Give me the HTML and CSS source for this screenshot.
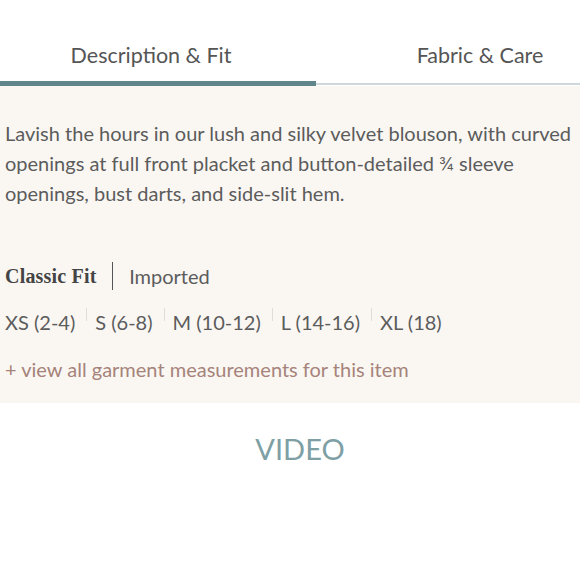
FILE: index.html
```html
<!DOCTYPE html>
<html>
<head>
<meta charset="utf-8">
<link rel="stylesheet" href="styles.css">
</head>
<body>
<div class="tabs">
  <div class="tab active">Description &amp; Fit</div>
  <div class="tab">Fabric &amp; Care</div>
</div>
<div class="panel">
  <p class="desc">Lavish the hours in our lush and silky velvet blouson, with curved openings at full front placket and button-detailed ¾ sleeve openings, bust darts, and side-slit hem.</p>
  <div class="fit">
    <span class="fit-name">Classic Fit</span>
    <span class="fit-sep"></span>
    <span class="fit-origin">Imported</span>
  </div>
  <div class="sizes">
    <span class="size">XS (2-4)</span>
    <span class="size">S (6-8)</span>
    <span class="size">M (10-12)</span>
    <span class="size">L (14-16)</span>
    <span class="size">XL (18)</span>
  </div>
  <div class="measure">+ view all garment measurements for this item</div>
</div>
<div class="video">VIDEO</div>
</body>
</html>
```
FILE: styles.css
```css
html, body {
  margin: 0;
  padding: 0;
  background: #fff;
}
body {
  font-family: Lato, "Open Sans", sans-serif;
  font-weight: 400;
  color: #555;
  width: 580px;
}
.tabs {
  display: flex;
  align-items: flex-end;
  padding-top: 41px;
}
.tab {
  font-size: 21.5px;
  line-height: 28px;
  color: #555;
  text-align: center;
  box-sizing: border-box;
}
.tab.active {
  width: 316px;
  padding-right: 14px;
  height: 45px;
  border-bottom: 5px solid #60868c;
}
.tab:not(.active) {
  flex: 1;
  height: 44px;
  padding-left: 64px;
  margin-bottom: 1px;
  border-bottom: 2px solid #cfd8d8;
}
.panel {
  background: #faf7f3;
  padding: 32px 0 20px 5px;
}
.desc {
  margin: 0;
  font-size: 20px;
  line-height: 30px;
  color: #5c5c5c;
}
.fit {
  display: flex;
  align-items: center;
  margin-top: 53px;
  height: 30px;
}
.fit-name {
  font-family: "Liberation Serif", serif;
  font-weight: bold;
  font-size: 20px;
  letter-spacing: 0.2px;
  color: #444;
}
.fit-sep {
  width: 1.5px;
  height: 28px;
  background: #555;
  margin: 0 16px 0 15px;
}
.fit-origin {
  font-size: 20px;
  color: #5c5c5c;
}
.sizes {
  display: flex;
  margin-top: 17px;
  font-size: 20px;
  line-height: 28px;
  color: #5c5c5c;
}
.size {
  position: relative;
  padding-right: 20px;
}
.size:not(:last-child)::after {
  content: "";
  position: absolute;
  right: 8px;
  top: 0;
  width: 1px;
  height: 13px;
  background: #e0dcd8;
}
.measure {
  margin-top: 19px;
  font-size: 20px;
  line-height: 28px;
  color: #a6837a;
}
.video {
  text-align: center;
  font-size: 29px;
  color: #7ea0a5;
  padding-top: 28px;
  padding-left: 20px;
}
```
